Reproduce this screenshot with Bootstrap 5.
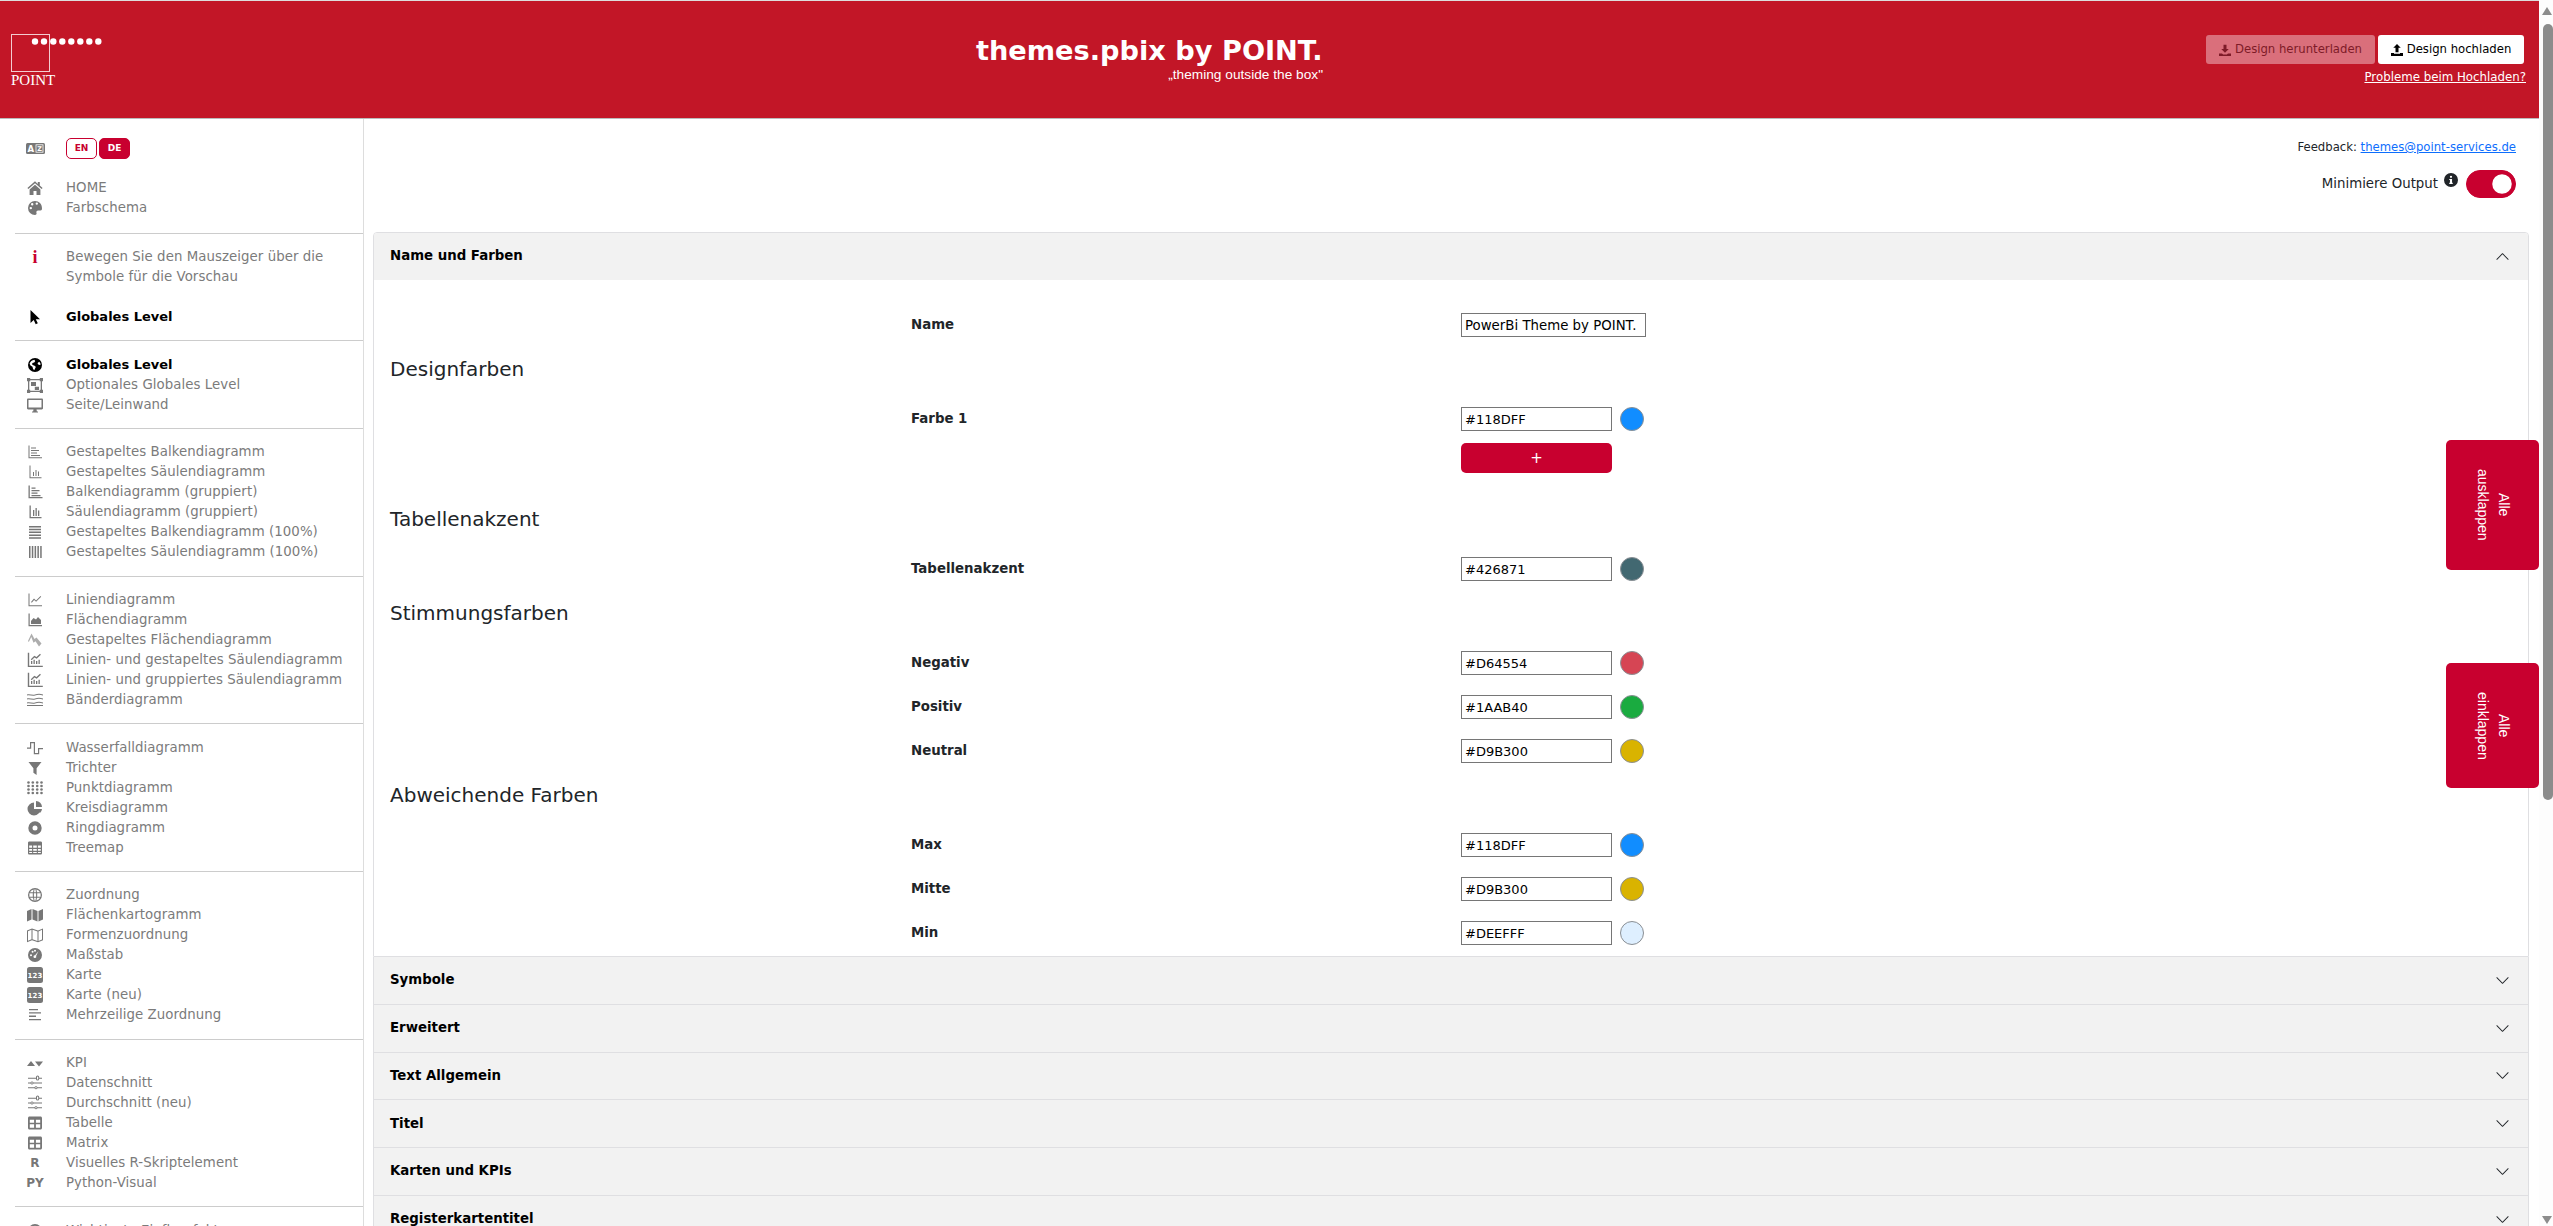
<!DOCTYPE html>
<html lang="de">
<head>
    <meta charset="UTF-8">
    <meta name="viewport" content="width=device-width, initial-scale=1.0">
    <title>themes.pbix by POINT.</title>
    <link href="https://cdn.jsdelivr.net/npm/bootstrap@5.3.0/dist/css/bootstrap.min.css" rel="stylesheet">
    <style>
        html, body { height: 100%; overflow: hidden; }
        body { font-family: "DejaVu Sans", Verdana, sans-serif; font-size: 13.33px; color: #212529; }

        .page-col { width: 2539px; height: 1226px; overflow: hidden; position: relative; }

        /* header */
        .top-bar { height: 119px; flex: none; background: #c21627; border-top: 1px solid #ddd; border-bottom: 1px solid #bbb; color: #fff; position: relative; }
        .logo-box { width: 130px; padding: 33px 0 0 11px; }
        .logo-name { font-family: "Liberation Serif", serif; font-size: 15px; line-height: 15px; margin-top: 1px; }
        .title-box { position: absolute; left: 976px; top: 32px; width: 347px; text-align: right; }
        .title-main { font-size: 27.2px; font-weight: 700; line-height: 36px; text-align: left; white-space: nowrap; }
        .title-sub { font-family: "Liberation Sans", sans-serif; font-size: 13.7px; line-height: 14px; margin-top: -1px; }
        .top-actions { position: absolute; right: 15px; top: 34px; text-align: right; }
        .act-btn { height: 29px; font-size: 11.67px; line-height: 15px; padding: 0; border-radius: 3px; border: 0; display: inline-flex; align-items: center; justify-content: center; gap: 4px; }
        .act-down { width: 169px; background: #da6f7b; color: #7e1b28; }
        .act-up { width: 146px; background: #fff; color: #000; margin-left: 3px; }
        .trouble-link { display: block; color: #fff; font-size: 11.8px; line-height: 14px; margin-top: 6px; margin-right: -2px; }
        .trouble-link:hover { color: #fff; }

        /* sidebar */
        .side-col { width: 364px; flex: none; height: 1107px; overflow: hidden; border-right: 1px solid #ddd; }
        .side-group { margin-left: 15px; margin-right: -1px; padding: 13.33px 0; border-bottom: 1px solid #ccc; }
        .side-group.first { padding: 18.5px 0 15.17px; }
        .side-row { height: 20px; display: flex; align-items: center; color: #7b7b7b; white-space: nowrap; margin-left: -15px; letter-spacing: .06px; }
        .side-row.on { color: #000; font-weight: 700; font-size: 13px; letter-spacing: 0; }
        .side-row.gap-up { margin-top: 20px; }
        .side-icon { width: 24px; height: 20px; margin: 0 19px 0 23px; flex: none; display: flex; align-items: center; justify-content: center; }
        .side-icon svg { width: 16px; height: 16px; fill: #777; display: block; }
        .side-row.on .side-icon svg { fill: #000; }
        .side-letter { font-weight: 700; font-size: 12px; color: #777; }
        .side-info { font-family: "Liberation Serif", serif; font-weight: 700; font-size: 18px; color: #c8002f; line-height: 20px; }
        .lang-row { height: 22px; display: flex; align-items: center; margin-left: -15px; margin-bottom: 18px; }
        .lang-icon { width: 19px !important; height: 11px !important; }
        .lang-btn { width: 31px; height: 21px; padding: 0; font-size: 9px; font-weight: 700; line-height: 19px; border-radius: 5px; border: 1px solid #c8002f; }
        .lang-en { background: #fff; color: #c8002f; margin-right: 2px; }
        .lang-de { background: #c8002f; color: #fff; }

        /* main */
        .main-col { flex: 1 1 0; min-width: 0; height: 1107px; overflow: hidden; padding: 0 10px 0 9px; }
        .meta-box { height: 113px; padding: 19px 13px 0 0; text-align: right; }
        .meta-feedback { font-size: 11.67px; line-height: 18px; color: #212529; }
        .meta-switch { display: flex; justify-content: flex-end; align-items: center; height: 28px; margin-top: 14px; color: #212529; }
        .meta-switch .form-check-input { width: 50px; height: 28px; margin: 0; float: none; background-color: #c8002f; border-color: #c8002f; }
        .meta-info { width: 14px; height: 14px; margin: -8px 8px 0 6px; display: block; fill: #212529; }
        .form-switch.meta-switch { padding-left: 0; min-height: 0; margin-bottom: 0; }

        .theme-acc { --bs-accordion-border-color: #dfdfe2; --bs-accordion-border-radius: 4px; --bs-accordion-inner-border-radius: 3px; --bs-accordion-btn-bg: #f2f2f2; --bs-accordion-active-bg: #f2f2f2; --bs-accordion-active-color: #000; --bs-accordion-btn-color: #000; --bs-accordion-btn-padding-x: 16px; --bs-accordion-btn-icon-width: 15px; }
        .theme-acc .accordion-button { height: 46.75px; padding-top: 0; padding-bottom: 0; font-size: 13.33px; font-weight: 700; box-shadow: none; }
        .theme-acc .accordion-button::after { background-size: 15px; margin-right: 2px; }
        .theme-acc .accordion-button:not(.collapsed)::after { background-image: var(--bs-accordion-btn-icon); }
        .theme-body { padding: 33.25px 0 11px 16px; }
        .theme-head { font-size: 20px; font-weight: 400; line-height: 24px; margin: 0 0 26px; color: #212529; }
        .theme-row { display: flex; align-items: center; height: 24px; margin-bottom: 20px; }
        .theme-row:last-child { margin-bottom: 0; }
        .theme-label { width: 550px; margin-left: 521px; font-weight: 700; color: #212529; flex: none; }
        .theme-input { width: 151px; height: 24px; padding: 1px 3px; border: 1px solid #767676; font-size: 13px; color: #000; font-family: inherit; border-radius: 0; }
        .theme-input.wide { width: 185px; font-size: 13.33px; }
        .color-dot { width: 24px; height: 24px; border-radius: 50%; margin-left: 8px; border: 1px solid #8a8f94; flex: none; }
        .add-color { display: block; width: 151px; height: 30px; margin: -8px 0 34px 1071px; background: #c8002f; color: #fff; border: 0; border-radius: 5px; padding: 0; font-size: 15px; line-height: 30px; }

        /* floating buttons */
        .float-btn { position: absolute; left: 2446px; width: 93px; background: #c8002f; color: #fff; border: 0; border-radius: 5px; font-family: "Liberation Sans", sans-serif; font-size: 14px; line-height: 21px; writing-mode: vertical-rl; padding: 0; display: flex; align-items: center; justify-content: center; text-align: center; }
        .float-open { top: 440px; height: 130px; }
        .float-close { top: 663px; height: 125px; }

        /* scrollbar */
        .scroll-col { width: 14px; height: 1226px; background: #fdfdfd; position: relative; flex: none; }
        .scroll-thumb { position: absolute; left: 4px; top: 24px; width: 10px; height: 776px; background: #8c8c8c; border-radius: 5px; }
        .scroll-up, .scroll-down { position: absolute; left: 3px; width: 0; height: 0; border-left: 5.5px solid transparent; border-right: 5.5px solid transparent; }
        .scroll-up { top: 7px; border-bottom: 8px solid #8c8c8c; }
        .scroll-down { top: 1216px; border-top: 8px solid #8c8c8c; }
    </style>
</head>
<body class="d-flex">
    <svg width="0" height="0" class="position-absolute">
        <defs>
            <symbol id="i-lang" viewBox="0 0 19 11"><rect width="19" height="11" rx="1.500"/><text x="4.800" y="8.800" font-size="8.500" font-weight="700" font-family="DejaVu Sans" fill="#fff" text-anchor="middle">A</text><rect x="10" y="1.800" width="7" height="7.400" fill="none" stroke="#fff" stroke-width=".8"/><text x="13.500" y="8.200" font-size="6.500" font-weight="700" font-family="DejaVu Sans" fill="#fff" text-anchor="middle">Z</text></symbol>
            <symbol id="i-home" viewBox="0 0 16 16"><path d="M8 1.200 .4 8l1 1.100L8 3.300l6.600 5.800 1-1.100-2.800-2.500V2h-2v2zM2.600 9.600V15h3.900v-4h3v4h3.900V9.600L8 4.800z"/></symbol>
            <symbol id="i-palette" viewBox="0 0 16 16"><path d="M8 1a7 7 0 1 0 0 14c1.300 0 1.900-.9 1.500-1.900-.5-1.300.2-2.600 1.700-2.600h2.300c1 0 1.500-.8 1.500-2.200C15 4 12 1 8 1zM3.800 9.300a1.200 1.200 0 1 1 0-2.400 1.200 1.200 0 0 1 0 2.400zM5.200 5.500a1.200 1.200 0 1 1 0-2.400 1.200 1.200 0 0 1 0 2.400zm4.600-.7a1.200 1.200 0 1 1 0-2.400 1.200 1.200 0 0 1 0 2.400z"/></symbol>
            <symbol id="i-cursor" viewBox="0 0 16 16"><path d="M3.500 1v13l3.200-3 2 4.300 2.100-1-2-4.100h4.200z"/></symbol>
            <symbol id="i-globe" viewBox="0 0 16 16"><path d="M8 1a7 7 0 1 0 0 14A7 7 0 0 0 8 1zm-.6 1.800.8 1.400-1 1.300-1.800.6-.3 1.500 1.700 1 1.400.3.500 1.300-1.300 2.700-1.300-.7-.6-2.400-2-1.400-.9-1.700C3.200 4.600 5 3 7.400 2.800zm4.800 1.900c.8.700 1.300 1.700 1.500 2.700l-1.300.6-1.500-.7-.3-1.300z"/></symbol>
            <symbol id="i-group" viewBox="0 0 16 16"><path d="M0 1h3.200v1h9.600V1H16v3.200h-1v8.600h1V16h-3.200v-1H3.200v1H0v-3.200h1V4.200H0zm2.300 3.200v8.600h.9v.9h9.600v-.9h.9V4.200h-.9v-.9H3.200v.9z"/><path d="M4 5h5v4H4zm3.800 4.800H12V13H7.800z"/></symbol>
            <symbol id="i-desktop" viewBox="0 0 16 16"><path d="M1.200 1.500h13.600c.7 0 1.200.5 1.200 1.200v8.600c0 .7-.5 1.200-1.200 1.200H1.200C.5 12.500 0 12 0 11.300V2.700c0-.7.500-1.200 1.200-1.200zm.3 1.500v7.500h13V3zM6.500 12.500h3l.4 2H11v1H5v-1h1.100z"/></symbol>
            <symbol id="i-hbar" viewBox="0 0 16 16"><path d="M1.500 1.500h1v11.700h12.500v1H1.500zM4 3.500h5v1H4zm0 2.500h8v1H4zm0 2.500h6v1H4zm0 2.500h9v1H4z"/></symbol>
            <symbol id="i-vbar" viewBox="0 0 16 16"><path d="M2.500 1.500h1v11.700h11v1h-12zM6 8h1v4H6zm2.500-2h1v6h-1zm2.500 1.500h1V12h-1z"/></symbol>
            <symbol id="i-hbar2" viewBox="0 0 16 16"><path d="M1.500 1.500h1.300v11.400h12.700v1.300h-14zM4.500 3.500h4v1.300h-4zm0 2.500h8v1.300h-8zm0 2.500h6v1.300h-6zm0 2.500h9v1.300h-9z"/></symbol>
            <symbol id="i-vbar2" viewBox="0 0 16 16"><path d="M2.500 1.500h1.300v11.400h10.700v1.300h-12zM6 6h1.300v6H6zm2.500-2h1.300v8H8.500zM11 6.500h1.300V12H11z"/></symbol>
            <symbol id="i-lines" viewBox="0 0 16 16"><path d="M2 2h12v1.500H2zm0 2.800h12v1.500H2zm0 2.800h12v1.500H2zm0 2.800h12v1.500H2zm0 2.800h12v1.500H2z"/></symbol>
            <symbol id="i-cols" viewBox="0 0 16 16"><path d="M2 2h1.500v12H2zm2.800 0h1.500v12H4.800zm2.800 0h1.500v12H7.600zm2.800 0h1.500v12h-1.500zm2.800 0h1.500v12h-1.500z"/></symbol>
            <symbol id="i-line" viewBox="0 0 16 16"><path d="M1.500 1.500h1v11.700h12.500v1H1.500zM4 10l3-3.400 2 1.800L13.500 4l.7.700-5.100 5.100-2-1.800-2.300 2.700z"/></symbol>
            <symbol id="i-area" viewBox="0 0 16 16"><path d="M1.500 1.500h1.200v11.500H15v1.300H1.500zM4 12V9l2.500-3 2.500 1.500L11 5l3 3v4z"/></symbol>
            <symbol id="i-stack" viewBox="0 0 16 16"><path d="M1 9l3.500-7.500L7.500 7l2-1.500 5 6-2.500 3-3.500-5.300-2 1.500L4.300 5 1.800 10z" fill-opacity=".6"/></symbol>
            <symbol id="i-combo" viewBox="0 0 16 16"><path d="M.8 .8h1.400v12.900h13.600v1.400H.8zM4 12V9h1.300v3zm2.500 0V7.800h1.300V12zM9 12V9h1.300v3zm2.500 0V7.800h1.300V12zM3.800 7.200l3.500-3.400 2.200 1.300 3.500-3.300.9.900-4.200 4-2.200-1.300-2.900 2.800z"/></symbol>
            <symbol id="i-ribbon" viewBox="0 0 16 16"><path d="M0 2.500c2.700-1 5.300 1 8 0s5.300-1 8 0v1c-2.700-1-5.300-1-8 0s-5.300-1-8 0zm0 4c2.700-1 5.300 1 8 0s5.300-1 8 0v1c-2.700-1-5.300-1-8 0s-5.300-1-8 0zm0 4c2.700-1 5.300 1 8 0s5.300-1 8 0v1c-2.700-1-5.300-1-8 0s-5.300-1-8 0zM0 13h16v1H0z"/></symbol>
            <symbol id="i-fall" viewBox="0 0 16 16"><path d="M0 7.500h3V2h5v11h3V8h5v1.200h-3.800v5H6.800v-11H4.200v5.500H0z"/></symbol>
            <symbol id="i-funnel" viewBox="0 0 16 16"><path d="M1.500 2h13L9.600 8.300V15l-3.200-2.300v-4.400z"/></symbol>
            <symbol id="i-dots" viewBox="0 0 16 16"><g><circle cx="1.500" cy="2.500" r="1.300"/><circle cx="5.800" cy="2.500" r="1.300"/><circle cx="10.200" cy="2.500" r="1.300"/><circle cx="14.500" cy="2.500" r="1.300"/><circle cx="1.500" cy="6" r="1.300"/><circle cx="5.800" cy="6" r="1.300"/><circle cx="10.200" cy="6" r="1.300"/><circle cx="14.500" cy="6" r="1.300"/><circle cx="1.500" cy="9.500" r="1.300"/><circle cx="5.800" cy="9.500" r="1.300"/><circle cx="10.200" cy="9.500" r="1.300"/><circle cx="14.500" cy="9.500" r="1.300"/><circle cx="1.500" cy="13" r="1.300"/><circle cx="5.800" cy="13" r="1.300"/><circle cx="10.200" cy="13" r="1.300"/><circle cx="14.500" cy="13" r="1.300"/></g></symbol>
            <symbol id="i-pie" viewBox="0 0 16 16"><path d="M7 2.500V9h6.500A6.500 6.500 0 1 1 7 2.500zM9 1a6 6 0 0 1 6 6H9zm0 8h6a6 6 0 0 1-2 4z"/></symbol>
            <symbol id="i-ring" viewBox="0 0 16 16"><path fill-rule="evenodd" d="M8 1.300a6.700 6.700 0 1 0 0 13.400A6.700 6.700 0 0 0 8 1.300zm0 4.200a2.500 2.500 0 1 1 0 5 2.500 2.500 0 0 1 0-5z"/></symbol>
            <symbol id="i-grid" viewBox="0 0 16 16"><path fill-rule="evenodd" d="M2.300 1.500h11.400c.7 0 1.300.6 1.300 1.300v10.400c0 .7-.6 1.300-1.300 1.300H2.300c-.7 0-1.300-.6-1.300-1.300V2.800c0-.7.600-1.300 1.300-1.300zM2.200 5.500V7.800h2.900V5.500zm4 0V7.800h3.600V5.500zm4.700 0V7.800h2.900V5.500zM2.200 8.900v1.900h2.900V8.900zm4 0v1.900h3.600V8.900zm4.700 0v1.900h2.900V8.900zM2.200 11.900v1h2.900v-1zm4 0v1h3.600v-1zm4.700 0v1h2.900v-1z"/></symbol>
            <symbol id="i-geo" viewBox="0 0 16 16"><path fill-rule="evenodd" d="M8 1a7 7 0 1 0 0 14A7 7 0 0 0 8 1zM6.600 2.400 6 5.200H2.900a5.600 5.600 0 0 1 3.700-2.800zM7.600 2.200h.8l.6 3H7zm1.800.2a5.600 5.600 0 0 1 3.700 2.800H10zM2.400 6.300h3.400v3.400H2.400zm4.500 0h2.200v3.400H6.900zm3.300 0h3.400v3.400h-3.400zM2.900 10.800H6l.6 2.800a5.600 5.600 0 0 1-3.700-2.800zm4.100 0h2l-.6 3h-.8zm3 0h3.100a5.600 5.600 0 0 1-3.700 2.800z"/></symbol>
            <symbol id="i-map" viewBox="0 0 16 16"><path d="M0 4l4.500-2v10.500L0 14.500zM5.500 2l5 2v10.500l-5-2zM11.500 4 16 2v10.500l-4.500 2z"/></symbol>
            <symbol id="i-mapo" viewBox="0 0 16 16"><path fill-rule="evenodd" d="M5 1.500l6 2 5-2v11.800l-5 2-6-2-5 2V3.500zM1 4.200v9.500l3.500-1.400V2.800zm4.500-1.400v9.500l5 1.700V4.500zm6 1.700v9.500l3.500-1.400V2.800z"/></symbol>
            <symbol id="i-gauge" viewBox="0 0 16 16"><path fill-rule="evenodd" d="M8 1a7 7 0 1 0 0 14A7 7 0 0 0 8 1zm3.400 3.300-2.300 4.600a1.400 1.400 0 1 1-1-.7zM4 7.200a1 1 0 1 1 0 2 1 1 0 0 1 0-2zM5.600 3.800a1 1 0 1 1 0 2 1 1 0 0 1 0-2zM8 2.800a1 1 0 1 1 0 2 1 1 0 0 1 0-2z"/></symbol>
            <symbol id="i-card" viewBox="0 0 16 16"><rect width="16" height="16" rx="2.500"/><text x="8" y="10.800" font-size="7" font-weight="700" font-family="DejaVu Sans" fill="#fff" text-anchor="middle">123</text></symbol>
            <symbol id="i-multi" viewBox="0 0 16 16"><path d="M2 2h9v1.300H2zm0 3.300h12v1.300H2zm0 3.300h7v1.300H2zm0 3.300h12v1.300H2z"/></symbol>
            <symbol id="i-kpi" viewBox="0 0 16 16"><path d="M0 11l4-5 4 5zm8-4.500h8l-4 5z"/></symbol>
            <symbol id="i-slicer" viewBox="0 0 16 16"><path fill-rule="evenodd" d="M1 2.700h8V2a1.600 1.600 0 0 1 3.200 0v.7H15v1h-2.800v.3a1.600 1.600 0 0 1-3.200 0v-.3H1zm9 0V4a.6.6 0 0 0 1.200 0V2A.6.6 0 0 0 10 2zM1 7.500h2.500a1.600 1.600 0 0 1 3 0H15v1H6.500a1.600 1.600 0 0 1-3 0H1zm3.300.5a.7.7 0 0 0 1.400 0 .7.7 0 0 0-1.400 0zM1 12.300h6.500a1.600 1.600 0 0 1 3 0H15v1h-4.500a1.600 1.600 0 0 1-3 0H1zm7.300.5a.7.7 0 0 0 1.400 0 .7.7 0 0 0-1.400 0z"/></symbol>
            <symbol id="i-table" viewBox="0 0 16 16"><path fill-rule="evenodd" d="M2.500 1.500h11c.8 0 1.500.7 1.500 1.500v10c0 .8-.7 1.500-1.500 1.500h-11c-.8 0-1.500-.7-1.500-1.500V3c0-.8.700-1.500 1.500-1.500zM2.800 4.800v3h4.300v-3zm6.100 0v3h4.300v-3zM2.800 9.200v3.500h4.300V9.200zm6.100 0v3.500h4.300V9.200z"/></symbol>
            <symbol id="i-info" viewBox="0 0 16 16"><path d="M8 0a8 8 0 1 0 0 16A8 8 0 0 0 8 0zm0 3a1.300 1.300 0 1 1 0 2.600A1.300 1.300 0 0 1 8 3zm2 9.500H6v-1.300h.8V8H6V6.800h3.200v4.400h.8z"/></symbol>
            <symbol id="i-down" viewBox="0 0 16 16"><path d="M6 1h4v5.500h3L8 11.500 3 6.500h3zM0 12.500h4l1.500 1.500h5l1.500-1.500h4V16H0z"/></symbol>
            <symbol id="i-up" viewBox="0 0 16 16"><path d="M8 0l5 5h-3v6H6V5H3zM0 12h4v1h8v-1h4v4H0z"/></symbol>
        </defs>
    </svg>

    <div class="page-col d-flex flex-column">
        <header class="top-bar">
            <div class="logo-box">
                <svg width="95" height="38" class="d-block" aria-hidden="true">
                    <rect x=".5" y=".5" width="38" height="37" fill="none" stroke="#f3ccd0"/>
                    <g fill="#fff"><circle cx="24" cy="7.500" r="3.200"/><circle cx="33" cy="7.500" r="3.200"/><circle cx="42.300" cy="7.500" r="3.200"/><circle cx="51.300" cy="7.500" r="3.200"/><circle cx="60.300" cy="7.500" r="3.200"/><circle cx="69.300" cy="7.500" r="3.200"/><circle cx="78.300" cy="7.500" r="3.200"/><circle cx="87.300" cy="7.500" r="3.200"/></g>
                </svg>
                <div class="logo-name">POINT</div>
            </div>
            <div class="title-box">
                <div class="title-main">themes.pbix by POINT.</div>
                <div class="title-sub">„theming outside the box"</div>
            </div>
            <div class="top-actions">
                <div>
                    <button class="act-btn act-down" type="button"><svg width="12" height="12" fill="#7e1b28"><use href="#i-down"/></svg>Design herunterladen</button><button class="act-btn act-up" type="button"><svg width="12" height="12" fill="#000"><use href="#i-up"/></svg>Design hochladen</button>
                </div>
                <a href="#" class="trouble-link">Probleme beim Hochladen?</a>
            </div>
        </header>

        <div class="d-flex flex-grow-1">
            <nav class="side-col">
                <div class="side-group first">
                    <div class="lang-row">
                        <span class="side-icon"><svg class="lang-icon"><use href="#i-lang"/></svg></span>
                        <button class="lang-btn lang-en" type="button">EN</button><button class="lang-btn lang-de" type="button">DE</button>
                    </div>
                    <div class="side-row"><span class="side-icon"><svg><use href="#i-home"/></svg></span>HOME</div>
                    <div class="side-row"><span class="side-icon"><svg><use href="#i-palette"/></svg></span>Farbschema</div>
                </div>
                <div class="side-group">
                    <div class="side-row"><span class="side-icon side-info">i</span>Bewegen Sie den Mauszeiger über die</div>
                    <div class="side-row"><span class="side-icon"></span>Symbole für die Vorschau</div>
                    <div class="side-row on gap-up"><span class="side-icon"><svg><use href="#i-cursor"/></svg></span>Globales Level</div>
                </div>
                <div class="side-group">
                    <div class="side-row on"><span class="side-icon"><svg><use href="#i-globe"/></svg></span>Globales Level</div>
                    <div class="side-row"><span class="side-icon"><svg><use href="#i-group"/></svg></span>Optionales Globales Level</div>
                    <div class="side-row"><span class="side-icon"><svg><use href="#i-desktop"/></svg></span>Seite/Leinwand</div>
                </div>
                <div class="side-group">
                    <div class="side-row"><span class="side-icon"><svg><use href="#i-hbar"/></svg></span>Gestapeltes Balkendiagramm</div>
                    <div class="side-row"><span class="side-icon"><svg><use href="#i-vbar"/></svg></span>Gestapeltes Säulendiagramm</div>
                    <div class="side-row"><span class="side-icon"><svg><use href="#i-hbar2"/></svg></span>Balkendiagramm (gruppiert)</div>
                    <div class="side-row"><span class="side-icon"><svg><use href="#i-vbar2"/></svg></span>Säulendiagramm (gruppiert)</div>
                    <div class="side-row"><span class="side-icon"><svg><use href="#i-lines"/></svg></span>Gestapeltes Balkendiagramm (100%)</div>
                    <div class="side-row"><span class="side-icon"><svg><use href="#i-cols"/></svg></span>Gestapeltes Säulendiagramm (100%)</div>
                </div>
                <div class="side-group">
                    <div class="side-row"><span class="side-icon"><svg><use href="#i-line"/></svg></span>Liniendiagramm</div>
                    <div class="side-row"><span class="side-icon"><svg><use href="#i-area"/></svg></span>Flächendiagramm</div>
                    <div class="side-row"><span class="side-icon"><svg><use href="#i-stack"/></svg></span>Gestapeltes Flächendiagramm</div>
                    <div class="side-row"><span class="side-icon"><svg><use href="#i-combo"/></svg></span>Linien- und gestapeltes Säulendiagramm</div>
                    <div class="side-row"><span class="side-icon"><svg><use href="#i-combo"/></svg></span>Linien- und gruppiertes Säulendiagramm</div>
                    <div class="side-row"><span class="side-icon"><svg><use href="#i-ribbon"/></svg></span>Bänderdiagramm</div>
                </div>
                <div class="side-group">
                    <div class="side-row"><span class="side-icon"><svg><use href="#i-fall"/></svg></span>Wasserfalldiagramm</div>
                    <div class="side-row"><span class="side-icon"><svg><use href="#i-funnel"/></svg></span>Trichter</div>
                    <div class="side-row"><span class="side-icon"><svg><use href="#i-dots"/></svg></span>Punktdiagramm</div>
                    <div class="side-row"><span class="side-icon"><svg><use href="#i-pie"/></svg></span>Kreisdiagramm</div>
                    <div class="side-row"><span class="side-icon"><svg><use href="#i-ring"/></svg></span>Ringdiagramm</div>
                    <div class="side-row"><span class="side-icon"><svg><use href="#i-grid"/></svg></span>Treemap</div>
                </div>
                <div class="side-group">
                    <div class="side-row"><span class="side-icon"><svg><use href="#i-geo"/></svg></span>Zuordnung</div>
                    <div class="side-row"><span class="side-icon"><svg><use href="#i-map"/></svg></span>Flächenkartogramm</div>
                    <div class="side-row"><span class="side-icon"><svg><use href="#i-mapo"/></svg></span>Formenzuordnung</div>
                    <div class="side-row"><span class="side-icon"><svg><use href="#i-gauge"/></svg></span>Maßstab</div>
                    <div class="side-row"><span class="side-icon"><svg><use href="#i-card"/></svg></span>Karte</div>
                    <div class="side-row"><span class="side-icon"><svg><use href="#i-card"/></svg></span>Karte (neu)</div>
                    <div class="side-row"><span class="side-icon"><svg><use href="#i-multi"/></svg></span>Mehrzeilige Zuordnung</div>
                </div>
                <div class="side-group">
                    <div class="side-row"><span class="side-icon"><svg><use href="#i-kpi"/></svg></span>KPI</div>
                    <div class="side-row"><span class="side-icon"><svg><use href="#i-slicer"/></svg></span>Datenschnitt</div>
                    <div class="side-row"><span class="side-icon"><svg><use href="#i-slicer"/></svg></span>Durchschnitt (neu)</div>
                    <div class="side-row"><span class="side-icon"><svg><use href="#i-table"/></svg></span>Tabelle</div>
                    <div class="side-row"><span class="side-icon"><svg><use href="#i-table"/></svg></span>Matrix</div>
                    <div class="side-row"><span class="side-icon side-letter">R</span>Visuelles R-Skriptelement</div>
                    <div class="side-row"><span class="side-icon side-letter">PY</span>Python-Visual</div>
                </div>
                <div class="side-group">
                    <div class="side-row"><span class="side-icon"><svg><use href="#i-gauge"/></svg></span>Wichtigste Einflussfaktoren</div>
                </div>
            </nav>

            <main class="main-col">
                <div class="meta-box">
                    <div class="meta-feedback">Feedback: <a href="#">themes@point-services.de</a></div>
                    <div class="form-check form-switch meta-switch">
                        <span>Minimiere Output</span>
                        <svg class="meta-info"><use href="#i-info"/></svg>
                        <input class="form-check-input" type="checkbox" role="switch" checked aria-label="Minimiere Output">
                    </div>
                </div>

                <div class="accordion theme-acc">
                    <div class="accordion-item">
                        <h2 class="accordion-header"><button class="accordion-button" type="button">Name und Farben</button></h2>
                        <div class="accordion-collapse collapse show">
                            <div class="theme-body">
                                <div class="theme-row"><span class="theme-label">Name</span><input class="theme-input wide" value="PowerBi Theme by POINT."></div>
                                <h3 class="theme-head">Designfarben</h3>
                                <div class="theme-row"><span class="theme-label">Farbe 1</span><input class="theme-input" value="#118DFF"><span class="color-dot" style="background:#118DFF"></span></div>
                                <button class="add-color" type="button">+</button>
                                <h3 class="theme-head">Tabellenakzent</h3>
                                <div class="theme-row"><span class="theme-label">Tabellenakzent</span><input class="theme-input" value="#426871"><span class="color-dot" style="background:#426871"></span></div>
                                <h3 class="theme-head">Stimmungsfarben</h3>
                                <div class="theme-row"><span class="theme-label">Negativ</span><input class="theme-input" value="#D64554"><span class="color-dot" style="background:#D64554"></span></div>
                                <div class="theme-row"><span class="theme-label">Positiv</span><input class="theme-input" value="#1AAB40"><span class="color-dot" style="background:#1AAB40"></span></div>
                                <div class="theme-row"><span class="theme-label">Neutral</span><input class="theme-input" value="#D9B300"><span class="color-dot" style="background:#D9B300"></span></div>
                                <h3 class="theme-head">Abweichende Farben</h3>
                                <div class="theme-row"><span class="theme-label">Max</span><input class="theme-input" value="#118DFF"><span class="color-dot" style="background:#118DFF"></span></div>
                                <div class="theme-row"><span class="theme-label">Mitte</span><input class="theme-input" value="#D9B300"><span class="color-dot" style="background:#D9B300"></span></div>
                                <div class="theme-row"><span class="theme-label">Min</span><input class="theme-input" value="#DEEFFF"><span class="color-dot" style="background:#DEEFFF"></span></div>
                            </div>
                        </div>
                    </div>
                    <div class="accordion-item"><h2 class="accordion-header"><button class="accordion-button collapsed" type="button">Symbole</button></h2></div>
                    <div class="accordion-item"><h2 class="accordion-header"><button class="accordion-button collapsed" type="button">Erweitert</button></h2></div>
                    <div class="accordion-item"><h2 class="accordion-header"><button class="accordion-button collapsed" type="button">Text Allgemein</button></h2></div>
                    <div class="accordion-item"><h2 class="accordion-header"><button class="accordion-button collapsed" type="button">Titel</button></h2></div>
                    <div class="accordion-item"><h2 class="accordion-header"><button class="accordion-button collapsed" type="button">Karten und KPIs</button></h2></div>
                    <div class="accordion-item"><h2 class="accordion-header"><button class="accordion-button collapsed" type="button">Registerkartentitel</button></h2></div>
                </div>
            </main>
        </div>

        <button class="float-btn float-open" type="button">Alle<br>ausklappen</button>
        <button class="float-btn float-close" type="button">Alle<br>einklappen</button>
    </div>

    <div class="scroll-col">
        <div class="scroll-up"></div>
        <div class="scroll-thumb"></div>
        <div class="scroll-down"></div>
    </div>

    <script src="https://cdn.jsdelivr.net/npm/bootstrap@5.3.0/dist/js/bootstrap.bundle.min.js"></script>
</body>
</html>
